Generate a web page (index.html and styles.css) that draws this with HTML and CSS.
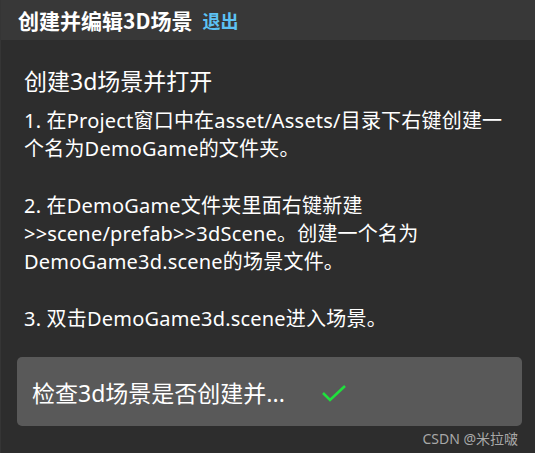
FILE: index.html
```html
<!DOCTYPE html>
<html lang="zh-CN">

<head>
  <meta charset="UTF-8">
  <meta name="viewport" content="width=device-width, initial-scale=1.0">
  <title>创建并编辑3D场景</title>
  <link rel="stylesheet" href="styles.css">
</head>

<body>
  <div class="panel">
    <div class="header">
      <span class="header-title">创建并编辑3D场景</span>
      <a class="header-exit">退出</a>
    </div>

    <div class="content">
      <h2 class="step-title">创建3d场景并打开</h2>
      <p class="step-text">1. 在Project窗口中在asset/Assets/目录下右键创建一个名为DemoGame的文件夹。</p>
      <p class="step-text">2. 在DemoGame文件夹里面右键新建<br>&gt;&gt;scene/prefab&gt;&gt;3dScene。创建一个名为DemoGame3d.scene的场景文件。</p>
      <p class="step-text">3. 双击DemoGame3d.scene进入场景。</p>

      <div class="check-btn">
        <span class="check-label">检查3d场景是否创建并...</span>
        <svg class="check-icon" width="26" height="18" viewBox="0 0 26 18">
          <path d="M2 9 L9 16 L24 2" fill="none" stroke="#1fe03c" stroke-width="2.6" stroke-linejoin="miter" />
        </svg>
      </div>

      <div class="watermark">CSDN @米拉啵</div>
    </div>
  </div>
</body>

</html>
```

FILE: styles.css
```css
* {
  box-sizing: border-box;
}

body {
  margin: 0;
  background: #2d2d2d;
  font-family: "Noto Sans", "Noto Sans CJK SC", sans-serif;
  color: #fff;
}

.panel {
  height: 453px;
  border-left: 1px solid #353535;
  display: flex;
  flex-direction: column;
}

/* 顶部标题栏 */
.header {
  height: 40px;
  background: #383838;
  display: flex;
  align-items: center;
  gap: 10px;
  padding-left: 17px;
}

.header-title {
  font-size: 21px;
  font-weight: bold;
  font-family: "Noto Sans CJK SC", sans-serif;
}

.header-exit {
  font-size: 18px;
  font-weight: bold;
  font-family: "Noto Sans CJK SC", sans-serif;
  color: #5cc2f4;
  cursor: pointer;
}

/* 内容区 */
.content {
  padding: 26px 13px 0 16px;
}

.step-title {
  margin: 0 0 11px 7px;
  font-size: 23px;
  line-height: 30px;
  font-weight: normal;
}

.step-text {
  margin: 0 12px 28.3px 7px;
  font-size: 20px;
  line-height: 28.3px;
  letter-spacing: 0.2px;
}

.step-text:last-of-type {
  margin-bottom: 24px;
}

/* 检查按钮 */
.check-btn {
  height: 69px;
  background: #595959;
  border-radius: 5px;
  display: flex;
  align-items: center;
  padding-left: 15px;
  gap: 36px;
}

.check-label {
  font-size: 23px;
}

.check-icon {
  display: block;
  margin-top: 2px;
}

.watermark {
  text-align: right;
  padding-right: 4px;
  margin-top: 2px;
  font-size: 14px;
  color: #a8a8a8;
}
```
